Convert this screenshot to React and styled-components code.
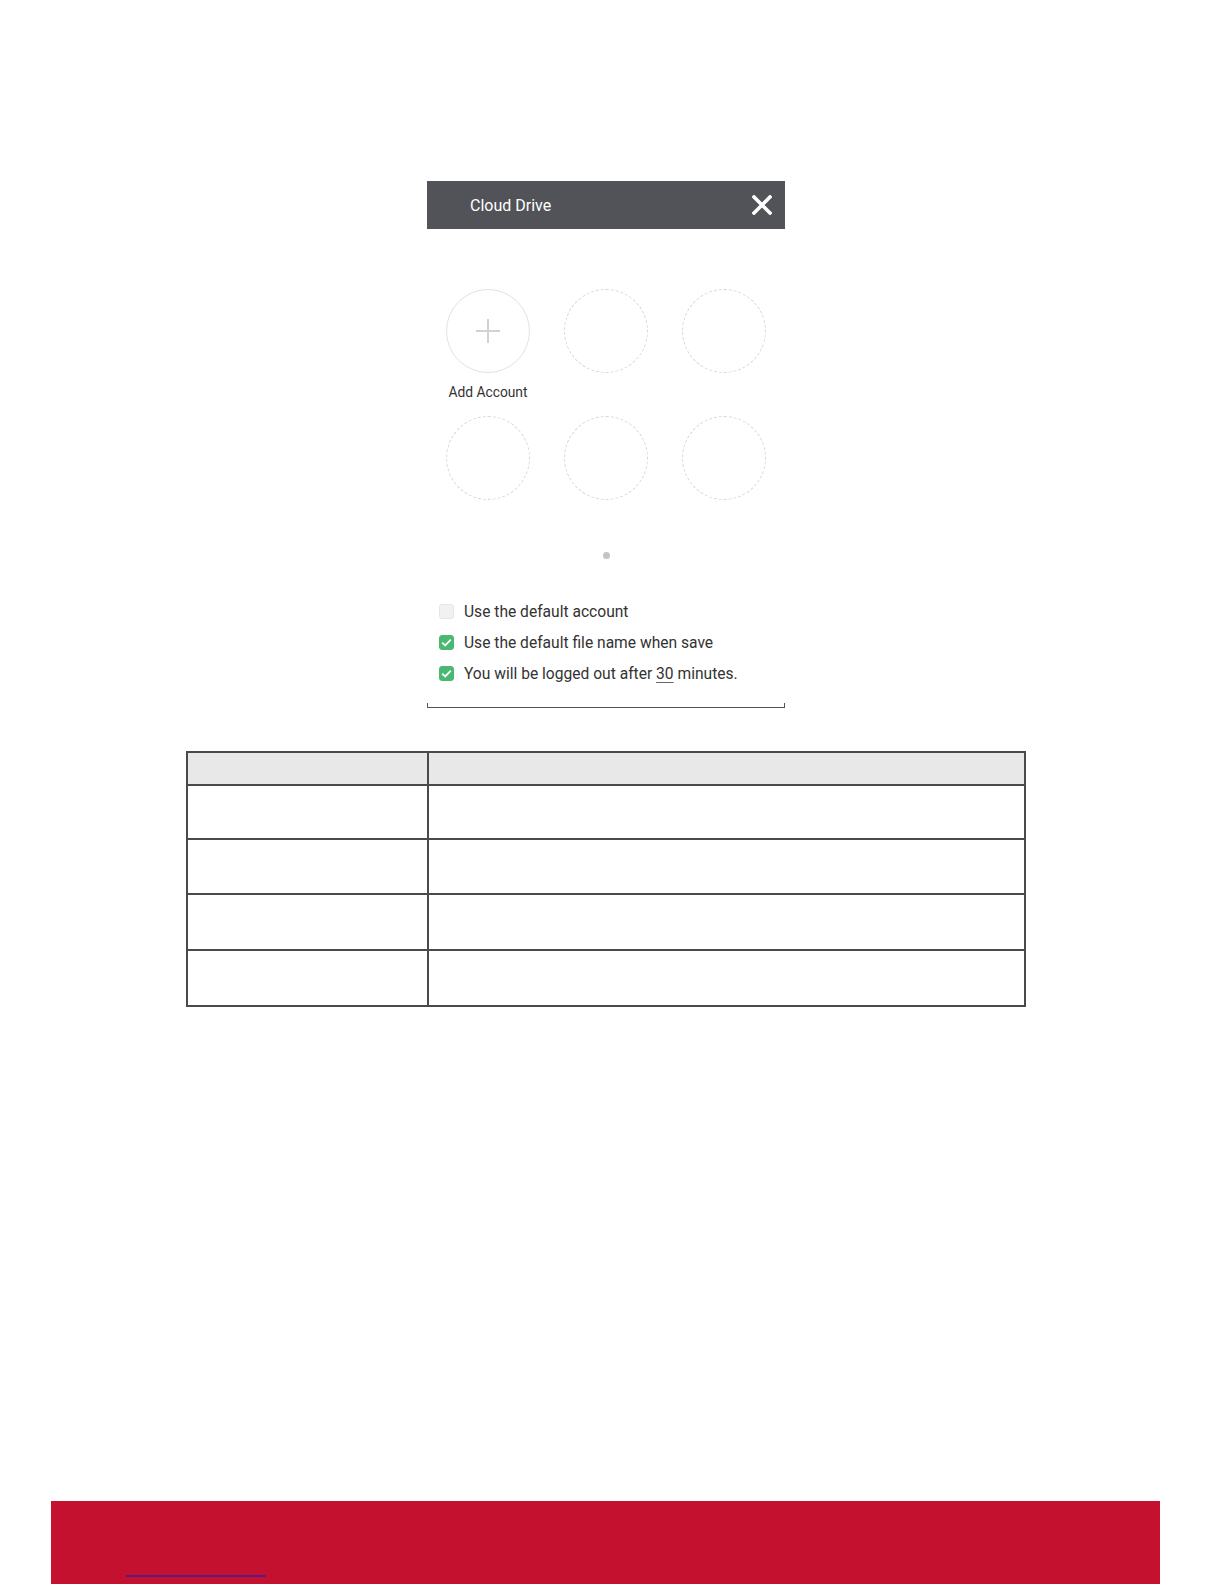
import React from 'react';
import styled, { createGlobalStyle } from 'styled-components';

const GlobalStyle = createGlobalStyle`
  html, body {
    margin: 0;
    padding: 0;
    background: #ffffff;
  }
  body {
    font-family: Roboto, "Liberation Sans", sans-serif;
  }
`;

const Page = styled.div`
  width: 1212px;
  height: 1584px;
  display: flex;
  flex-direction: column;
  padding-top: 181px;
  box-sizing: border-box;
  overflow: hidden;
`;

const Dialog = styled.div`
  width: 358px;
  margin: 0 auto;
  display: flex;
  flex-direction: column;
`;

const DialogHeader = styled.div`
  height: 48px;
  background: #515358;
  display: flex;
  align-items: center;
  justify-content: space-between;
  padding: 0 13px 0 43px;
  color: #ffffff;
  font-size: 16px;
`;

const CloseButton = styled.button`
  border: 0;
  background: none;
  padding: 0;
  width: 20px;
  height: 20px;
  display: flex;
  align-items: center;
  justify-content: center;
  cursor: pointer;
`;

const AccountGrid = styled.div`
  display: grid;
  grid-template-columns: repeat(3, 84px);
  grid-template-rows: 127px 84px;
  column-gap: 34px;
  padding: 0 19px;
  margin-top: 60px;
`;

const Slot = styled.div`
  display: flex;
  flex-direction: column;
  align-items: center;
`;

const Circle = styled.div`
  width: 84px;
  height: 84px;
  box-sizing: border-box;
  border-radius: 50%;
  border: ${(p) => (p.$filled ? '1.5px solid #e2e2e2' : '1.2px dashed #d4d4d4')};
  display: flex;
  align-items: center;
  justify-content: center;
`;

const SlotLabel = styled.div`
  margin-top: 11px;
  font-size: 13.8px;
  line-height: 16px;
  color: #333333;
  white-space: nowrap;
`;

const PageDot = styled.div`
  width: 7px;
  height: 7px;
  border-radius: 50%;
  background: #c4c4c4;
  margin: 52px auto 0;
`;

const OptionList = styled.div`
  display: flex;
  flex-direction: column;
  margin-top: 37px;
  padding-left: 12px;
`;

const OptionRow = styled.label`
  height: 31px;
  display: flex;
  align-items: center;
  gap: 10px;
  font-size: 15.6px;
  color: #333333;
`;

const Box = styled.span`
  width: 15px;
  height: 15px;
  box-sizing: border-box;
  border-radius: 3px;
  background: ${(p) => (p.$checked ? '#48b873' : '#f1f1f1')};
  border: 1px solid ${(p) => (p.$checked ? '#48b873' : '#e6e6e6')};
  display: flex;
  align-items: center;
  justify-content: center;
`;

const Minutes = styled.span`
  text-decoration: underline;
  text-underline-offset: 3px;
  text-decoration-color: #666;
`;

const DialogBottom = styled.div`
  margin-top: 14px;
  height: 4px;
  border: 1px solid #555555;
  border-top: 0;
`;

const Table = styled.table`
  width: 840px;
  margin: 43px auto 0;
  border-collapse: collapse;
  table-layout: fixed;
`;

const Th = styled.th`
  height: 31px;
  background: #e8e8e8;
  border: 2px solid #4a4a4a;
  padding: 0;
`;

const Td = styled.td`
  height: ${(p) => p.$h}px;
  border: 2px solid #4a4a4a;
  padding: 0;
`;

const Footer = styled.footer`
  margin: auto 0 0 51px;
  width: 1109px;
  height: 83px;
  flex-shrink: 0;
  background: #c4112f;
  display: flex;
  align-items: flex-end;
  padding: 0 0 7px 75px;
  box-sizing: border-box;
`;

const FooterLink = styled.a`
  display: block;
  width: 140px;
  height: 0;
  border-bottom: 2px solid #5a1a86;
`;

function CloseIcon() {
  return (
    <svg width="20" height="20" viewBox="0 0 20 20">
      <path d="M2 2L18 18M18 2L2 18" stroke="#ffffff" strokeWidth="3.6" strokeLinecap="square" />
    </svg>
  );
}

function PlusIcon() {
  return (
    <svg width="28" height="28" viewBox="0 0 28 28">
      <path d="M14 2V26M2 14H26" stroke="#d2d2d2" strokeWidth="2" />
    </svg>
  );
}

function CheckMark() {
  return (
    <svg width="11" height="9" viewBox="0 0 11 9">
      <path d="M1.2 4.6L4.2 7.4L9.8 1.6" fill="none" stroke="#ffffff" strokeWidth="1.8" />
    </svg>
  );
}

const rows = [52, 53, 54, 54];

export default function App() {
  return (
    <>
      <GlobalStyle />
      <Page>
        <Dialog>
          <DialogHeader>
            <span>Cloud Drive</span>
            <CloseButton aria-label="Close">
              <CloseIcon />
            </CloseButton>
          </DialogHeader>

          <AccountGrid>
            <Slot>
              <Circle $filled>
                <PlusIcon />
              </Circle>
              <SlotLabel>Add Account</SlotLabel>
            </Slot>
            <Slot><Circle /></Slot>
            <Slot><Circle /></Slot>
            <Slot><Circle /></Slot>
            <Slot><Circle /></Slot>
            <Slot><Circle /></Slot>
          </AccountGrid>

          <PageDot />

          <OptionList>
            <OptionRow>
              <Box />
              Use the default account
            </OptionRow>
            <OptionRow>
              <Box $checked><CheckMark /></Box>
              Use the default file name when save
            </OptionRow>
            <OptionRow>
              <Box $checked><CheckMark /></Box>
              <span>
                You will be logged out after <Minutes>30</Minutes> minutes.
              </span>
            </OptionRow>
          </OptionList>

          <DialogBottom />
        </Dialog>

        <Table>
          <colgroup>
            <col style={{ width: 241 }} />
            <col />
          </colgroup>
          <thead>
            <tr>
              <Th />
              <Th />
            </tr>
          </thead>
          <tbody>
            {rows.map((h, i) => (
              <tr key={i}>
                <Td $h={h} />
                <Td $h={h} />
              </tr>
            ))}
          </tbody>
        </Table>

        <Footer>
          <FooterLink href="#" />
        </Footer>
      </Page>
    </>
  );
}
